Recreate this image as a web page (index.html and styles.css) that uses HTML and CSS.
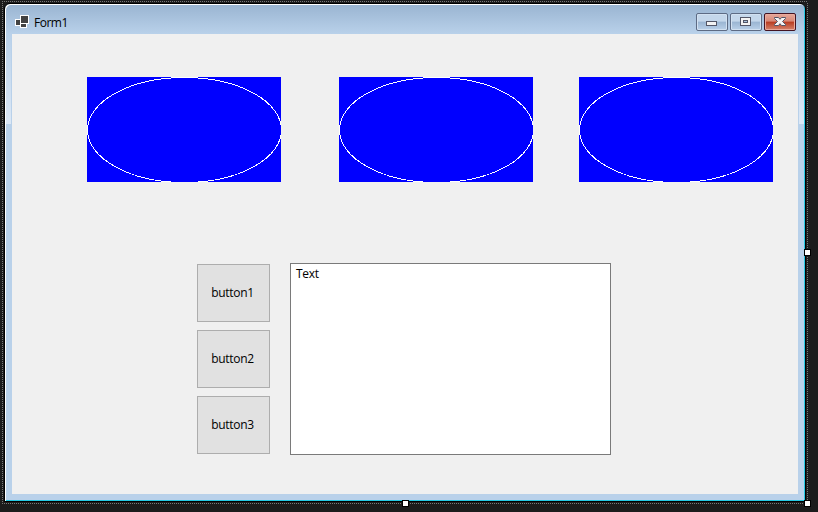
FILE: index.html
```html
<!DOCTYPE html>
<html lang="en">
<head>
<meta charset="utf-8">
<title>Form1</title>
<link rel="stylesheet" href="styles.css">
</head>
<body>
<div class="selection">
  <div class="window">
    <header class="titlebar">
      <svg class="app-icon" width="14" height="13" viewBox="0 0 14 13" shape-rendering="crispEdges">
        <path fill="#fff" d="M5 0h9v9h-2v4H5v-2H0V4h5z"/>
        <path fill="#424242" d="M6 1h7v7H6zM1 5h4v5H1zM6 9h5v3H6z"/>
      </svg>
      <span class="title">Form1</span>
      <div class="controls">
        <span class="control"><svg width="30" height="16" shape-rendering="crispEdges"><path fill="#535666" d="M9 7h11v5H9z"/><path fill="#f3f3f3" d="M10 8h9v3h-9z"/></svg></span>
        <span class="control"><svg width="30" height="16" shape-rendering="crispEdges"><path fill="#535666" d="M9 3h11v9H9z"/><path fill="#f3f3f3" d="M10 4h9v7h-9z"/><path fill="#535666" d="M12 6h5v3h-5z"/><path fill="#a9c4df" d="M13 7h3v1h-3z"/></svg></span>
        <span class="control close"><svg width="30" height="16"><path fill="#f5f5f5" stroke="#535666" d="M9.500 3.500h4l1.500 1.800 1.500-1.800h4v1l-3 3 3 3v1h-4l-1.500-1.800-1.500 1.800h-4v-1l3-3-3-3z"/></svg></span>
      </div>
    </header>
    <main class="client">
      <section class="pictures">
        <svg class="picture" width="194" height="105" shape-rendering="crispEdges"><ellipse cx="97.500" cy="53" rx="97" ry="52.500"/></svg>
        <svg class="picture" width="194" height="105" shape-rendering="crispEdges"><ellipse cx="97.500" cy="53" rx="97" ry="52.500"/></svg>
        <svg class="picture" width="194" height="105" shape-rendering="crispEdges"><ellipse cx="97.500" cy="53" rx="97" ry="52.500"/></svg>
      </section>
      <section class="lower">
        <div class="buttons">
          <button>button1</button>
          <button>button2</button>
          <button>button3</button>
        </div>
        <div class="textbox">Text</div>
      </section>
    </main>
  </div>
  <i class="handle east"></i>
  <i class="handle south"></i>
  <i class="handle corner"></i>
</div>
</body>
</html>
```
FILE: styles.css
```css
* { box-sizing: border-box; }
body {
  margin: 0;
  padding: 1px 0 0 2px;
  height: 512px;
  overflow: hidden;
  background: #1c1c1c;
  color: #000;
  font: 12px/16px "Open Sans", "Noto Sans", sans-serif;
  letter-spacing: -0.3px;
}
.selection {
  position: relative;
  width: 806px;
  height: 503px;
  padding: 2px;
  background:
    repeating-linear-gradient(90deg, #777 0 1px, #1c1c1c 1px 2px) 0 0 / 100% 1px no-repeat,
    repeating-linear-gradient(90deg, #777 0 1px, #1c1c1c 1px 2px) 0 100% / 100% 1px no-repeat,
    repeating-linear-gradient(#777 0 1px, #1c1c1c 1px 2px) 0 0 / 1px 100% no-repeat,
    repeating-linear-gradient(#777 0 1px, #1c1c1c 1px 2px) 100% 0 / 1px 100% no-repeat;
}
.window {
  width: 802px;
  height: 499px;
  padding: 0 6px 6px 7px;
  border: 1px solid #000;
  border-radius: 6px 6px 0 0;
  background:
    linear-gradient(#b9d1ea, #dce8f6) 1px 30px / 5px 90px no-repeat,
    linear-gradient(#b9d1ea, #dce8f6) 794px 30px / 5px 90px no-repeat,
    linear-gradient(#99b4d1 0, #b9d1ea 30px);
  box-shadow: inset 1px 1px #fff, inset -1px -1px #25c9e4;
}
.titlebar {
  display: flex;
  align-items: flex-start;
  height: 30px;
  padding: 0 3px 0 3px;
}
.app-icon { margin-top: 11px; }
.title { margin: 11px 0 0 5px; letter-spacing: -0.5px; }
.controls { display: flex; gap: 2px; margin: 9px 0 0 auto; }
.control {
  width: 32px;
  height: 18px;
  border: 1px solid #5d6b84;
  border-radius: 2px;
  background: linear-gradient(#c4d7eb 0 45%, #9ab5d2 50%, #bad1e9);
  box-shadow: inset 0 0 0 1px #d2e1f1;
}
.control svg { display: block; }
.close {
  border-color: #431422;
  background: linear-gradient(#e5a89b, #d88775 45%, #b83b20 50%, #d5836b);
  box-shadow: inset 0 0 0 1px #e9aa9c;
}
.client {
  height: 460px;
  width: 786px;
  padding: 43px 25px 0 75px;
  background: #f0f0f0;
}
.pictures { display: flex; }
.picture { display: block; background: #00f; }
.picture + .picture { margin-left: 58px; }
.picture:last-child { margin-left: 46px; }
.picture ellipse { fill: none; stroke: #fff; stroke-width: 1; }
.lower { display: flex; gap: 20px; margin: 81px 0 0 110px; }
.buttons { display: flex; flex-direction: column; gap: 8px; padding-top: 1px; }
button {
  width: 73px;
  height: 58px;
  padding: 0 2px 1px 0;
  border: 1px solid #adadad;
  background: #e1e1e1;
  color: #000;
  font: inherit;
  letter-spacing: inherit;
}
.textbox {
  width: 321px;
  height: 192px;
  padding: 2px 5px;
  border: 1px solid #7a7a7a;
  background: #fff;
}
.handle {
  position: absolute;
  width: 7px;
  height: 7px;
  border: 1px solid #000;
  background: #fff;
}
.east { left: 802px; top: 248px; }
.south { left: 400px; top: 499px; }
.corner { left: 802px; top: 499px; }
```
